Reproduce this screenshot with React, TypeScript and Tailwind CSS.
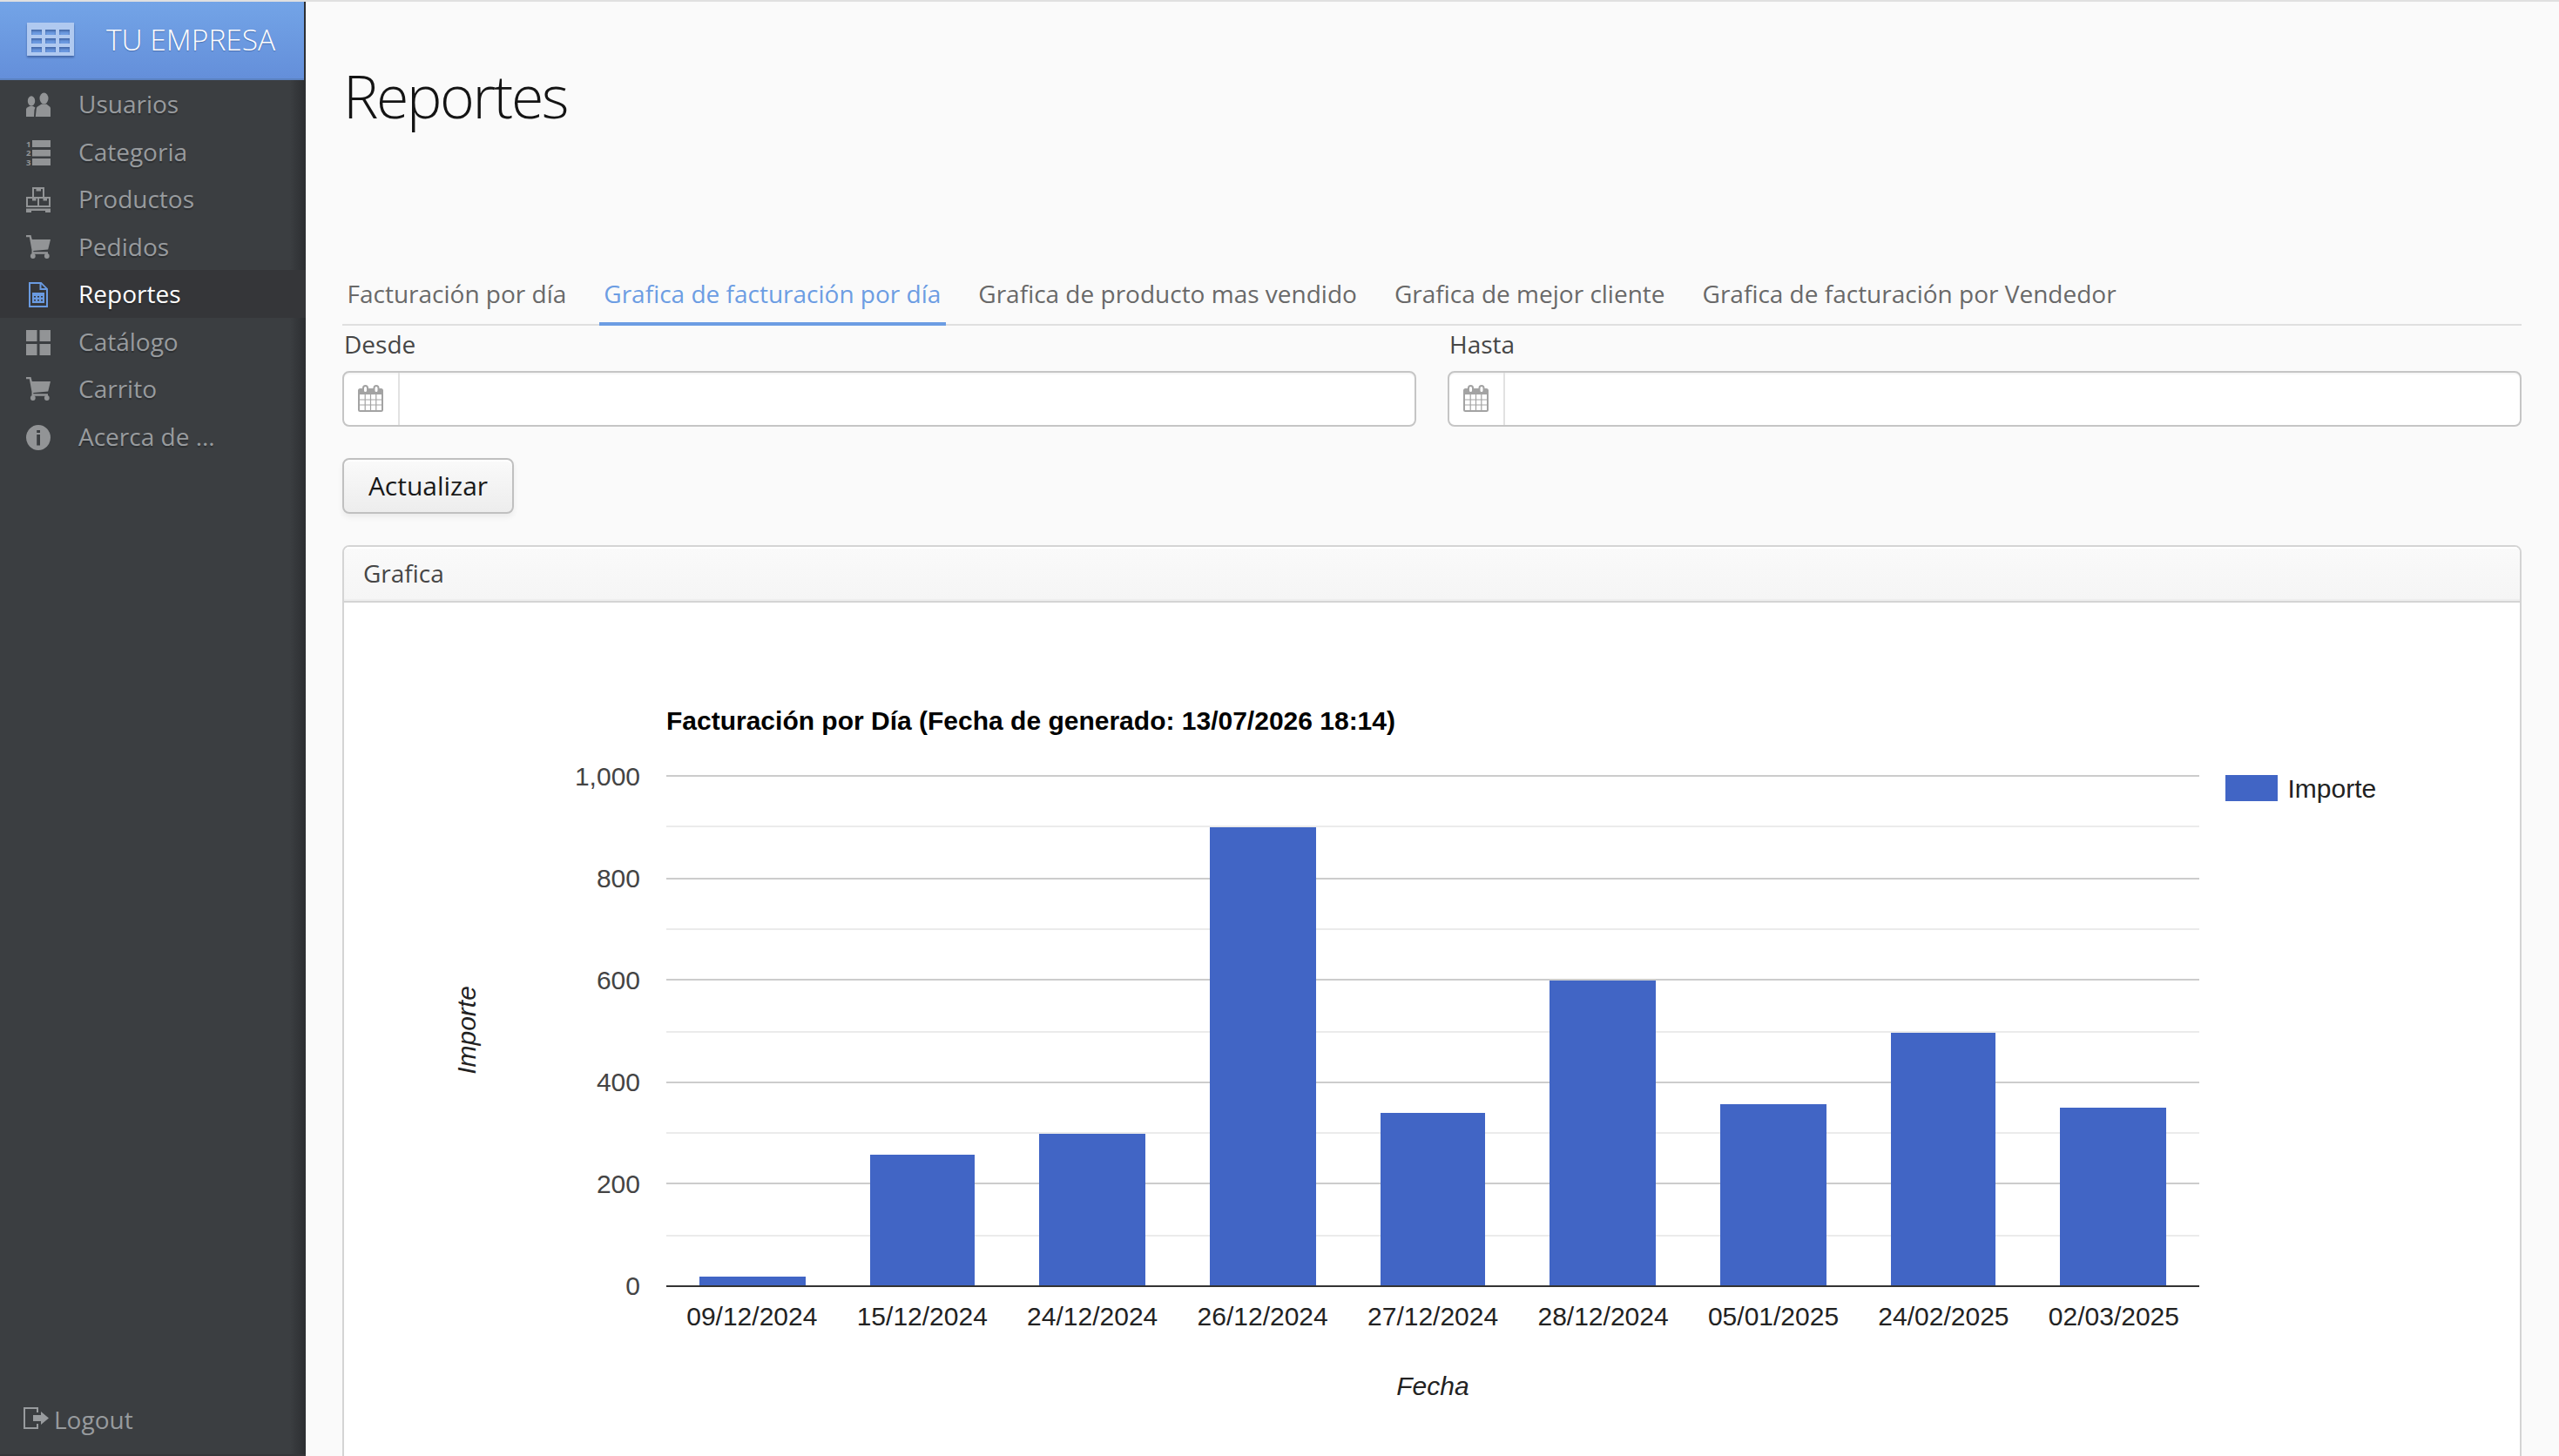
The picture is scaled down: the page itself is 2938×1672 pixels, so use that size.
import type { ReactNode } from "react";

const icons: Record<string, ReactNode> = {
  users: (
    <>
      <ellipse cx="6" cy="10" rx="4.2" ry="5.8" />
      <path d="M0 28V19.500q0-2 2-2.500l2-1h4l2.500 1.500L9.500 20l-.500 8z" />
      <ellipse cx="20.500" cy="7" rx="5" ry="6.500" />
      <path d="M10.800 28l1-9.500q.200-2 2-2.500l4-2.500h5.500l3.200 2.500q1.500.700 1.500 2.500V28z" />
    </>
  ),
  list: (
    <>
      <rect x="7" y="0" width="21" height="8" />
      <rect x="7" y="11" width="21" height="7.500" />
      <rect x="7" y="21" width="21" height="8" />
      <g className="font-['Open_Sans',sans-serif] text-[9.5px] font-bold">
        <text x="0" y="7.500">1</text>
        <text x="0" y="18">2</text>
        <text x="0" y="28.500">3</text>
      </g>
    </>
  ),
  stock: (
    <>
      <path fillRule="evenodd" d="M7 0h14v11h7v12H0V11h7zM9 2v9h4v0h6V2h-2v2.500h-5.500V2zM2 13v8h11v-8h-1.500v2.500h-4.500V13zM15 13v8h11v-8h-2v2.500h-4.500V13z" />
      <path d="M0 24.500h28V29h-6v-2H6v2H0z" />
    </>
  ),
  cart: (
    <>
      <path d="M0 0h5.500l1.300 5H28l-2.800 11.500L8.300 18v1.300H25v2.500H6.500V17L3.800 2.200H0z" />
      <circle cx="7.800" cy="24" r="2.900" />
      <circle cx="23.800" cy="24" r="2.900" />
    </>
  ),
  report: (
    <>
      <path fillRule="evenodd" d="M3 0h14.500L25 7.500V29H3zM5 2v25h18V9h-7.500V2zM17.500 2.500V7H22z" />
      <path fillRule="evenodd" d="M7 12h14v12H7zM9 16v1.500h2V16zM13 16v1.500h2V16zM17 16v1.500h2V16zM9 20v1.500h2V20zM13 20v1.500h2V20zM17 20v1.500h2V20z" />
    </>
  ),
  grid: <path d="M0 0h12.500v13H0zM15.500 0H28v13H15.500zM0 16h12.500v13H0zM15.500 16H28v13H15.500z" />,
  info: (
    <path fillRule="evenodd" d="M14 0a14 14.500 0 1 1 0 29a14 14.500 0 1 1 0-29zM12.200 6v3h3.800V6zM12.200 11v12.500h3.800V11z" />
  ),
};

const menu = [
  { icon: "users", label: "Usuarios" },
  { icon: "list", label: "Categoria" },
  { icon: "stock", label: "Productos" },
  { icon: "cart", label: "Pedidos" },
  { icon: "report", label: "Reportes", active: true },
  { icon: "grid", label: "Catálogo" },
  { icon: "cart", label: "Carrito" },
  { icon: "info", label: "Acerca de ..." },
];

const tabs = [
  "Facturación por día",
  "Grafica de facturación por día",
  "Grafica de producto mas vendido",
  "Grafica de mejor cliente",
  "Grafica de facturación por Vendedor",
];

// plot coordinates are relative to the panel body
const bars = [
  { label: "09/12/2024", x: 408, w: 122, top: 774 },
  { label: "15/12/2024", x: 604, w: 120, top: 634 },
  { label: "24/12/2024", x: 798, w: 122, top: 610 },
  { label: "26/12/2024", x: 994, w: 122, top: 258 },
  { label: "27/12/2024", x: 1190, w: 120, top: 586 },
  { label: "28/12/2024", x: 1384, w: 122, top: 434 },
  { label: "05/01/2025", x: 1580, w: 122, top: 576 },
  { label: "24/02/2025", x: 1776, w: 120, top: 494 },
  { label: "02/03/2025", x: 1970, w: 122, top: 580 },
];

const majorLines = [198, 316, 432, 550, 666];
const minorLines = [256, 374, 492, 608, 726];
const ticks = ["1,000", "800", "600", "400", "200", "0"];

function Logo() {
  return (
    <svg className="h-[44px] w-[56px] drop-shadow-[0_2px_1px_rgba(40,70,130,0.6)]" viewBox="0 0 56 44">
      <path
        fill="#b0c9f0"
        fillRule="evenodd"
        d="M1 2h54v38H1zM6 10v6h12v-6zM22 10v6h12v-6zM38 10v6h12v-6zM6 20v6h12v-6zM22 20v6h12v-6zM38 20v6h12v-6zM6 30v6h12v-6zM22 30v6h12v-6zM38 30v6h12v-6z"
      />
    </svg>
  );
}

function Sidebar() {
  return (
    <aside className="relative flex w-[351px] shrink-0 flex-col bg-[#3b3e41] text-[28px] text-[#989b9e]">
      <div className="absolute inset-y-0 right-0 w-[18px] bg-gradient-to-r from-transparent to-[#2c2e31]" />
      <div className="relative mr-[2px] flex h-[90px] items-center border-b-2 border-[#5b82c2] bg-gradient-to-b from-[#73a4e7] to-[#648fda] pl-[30px]">
        <Logo />
        <span className="mb-[2px] ml-[36px] text-[33.5px] font-light whitespace-nowrap text-white [text-shadow:0_1px_1px_rgba(40,70,130,0.5)]">
          TU EMPRESA
        </span>
      </div>
      <nav className="relative">
        {menu.map((m, i) => (
          <div
            key={i}
            className={`flex h-[54.5px] pl-[30px] ${m.active ? "bg-[#353639] text-white" : ""}`}
          >
            <svg
              className={`mt-[14px] h-[29px] w-[28px] shrink-0 overflow-visible ${m.active ? "text-[#6a9ae0]" : "text-[#929496]"}`}
              viewBox="0 0 28 29"
              fill="currentColor"
            >
              {icons[m.icon]}
            </svg>
            <span className="ml-[32px] leading-[55px] whitespace-nowrap [text-shadow:0_2px_1px_rgba(0,0,0,0.25)]">
              {m.label}
            </span>
          </div>
        ))}
      </nav>
      <div className="relative mt-auto flex h-[82px] items-center border-b-2 border-[#353639] pl-[27px]">
        <svg className="mt-[-4px] h-[25px] w-[29px]" viewBox="0 0 29 25" fill="currentColor">
          <path d="M0 0h17v6h-2V2H2v21h13v-4h2v6H0z" />
          <path d="M11 9h9V5l9 7.500-9 7.500v-4h-9z" />
        </svg>
        <span className="ml-[6px]">Logout</span>
      </div>
    </aside>
  );
}

function DateField({ label }: { label: string }) {
  return (
    <div>
      <div className="pl-[2px] text-[28px] leading-[42px]">{label}</div>
      <div className="mt-[10px] flex h-[64px] overflow-hidden rounded-[8px] border-2 border-[#c5c5c5] bg-white shadow-[inset_0_2px_0_#f7f7f7]">
        <div className="w-[64px] border-r-2 border-[#e2e2e2] pt-[14px] pl-[16px]">
          <svg className="h-[31px] w-[29px] text-[#a3a3a3]" viewBox="0 0 29 31">
            <rect x="1" y="5" width="27" height="25" rx="1.500" fill="none" stroke="currentColor" strokeWidth="2" />
            <path fill="currentColor" d="M1 5h27v6H1z" />
            <path stroke="currentColor" strokeWidth="1.200" d="M8.200 11v18M14.500 11v18M20.800 11v18M2 17h25M2 23h25" />
            <rect x="6" y="1" width="5" height="8" rx="2.500" fill="#fff" stroke="currentColor" strokeWidth="2" />
            <rect x="18.500" y="1" width="5" height="8" rx="2.500" fill="#fff" stroke="currentColor" strokeWidth="2" />
          </svg>
        </div>
      </div>
    </div>
  );
}

function Chart() {
  return (
    <svg
      className="block h-[980px] w-[2498px] font-['Liberation_Sans',Arial,sans-serif] text-[30px]"
      viewBox="0 0 2498 980"
      fill="#222"
    >
      <text x="370" y="146" fill="#000" className="font-bold">
        Facturación por Día (Fecha de generado: 13/07/2026 18:14)
      </text>
      {minorLines.map((y) => (
        <rect key={y} x="370" y={y} width="1760" height="2" fill="#ebebeb" />
      ))}
      {majorLines.map((y) => (
        <rect key={y} x="370" y={y} width="1760" height="2" fill="#ccc" />
      ))}
      {ticks.map((t, i) => (
        <text key={t} x="340" y={210 + i * 117} textAnchor="end" fill="#444">{t}</text>
      ))}
      {bars.map((b, i) => (
        <g key={b.label}>
          <rect x={b.x} y={b.top} width={b.w} height={784 - b.top} fill="#4165c5" />
          <text x={468.3 + i * 195.45} y="830" textAnchor="middle">{b.label}</text>
        </g>
      ))}
      <rect x="370" y="784" width="1760" height="2" fill="#333" />
      <text x="1250" y="910" textAnchor="middle" className="italic">Fecha</text>
      <text transform="translate(151 491) rotate(-90)" textAnchor="middle" className="italic">Importe</text>
      <rect x="2160" y="198" width="60" height="30" fill="#4165c5" />
      <text x="2231.500" y="224">Importe</text>
    </svg>
  );
}

export default function App() {
  return (
    <div className="flex h-[1672px] w-[2938px] overflow-hidden border-t-2 border-[#e0e0e0] bg-[#fafafa] font-['Open_Sans',sans-serif] text-[#464646]">
      <Sidebar />
      <main className="flex-1 pr-[43px] pl-[42px]">
        <h1 className="mt-[68px] pl-px text-[68px] leading-[80px] font-light tracking-[-2.4px] text-[#141414]">Reportes</h1>

        {/* Tabs */}
        <div className="mt-[152px] flex h-[72px] border-b-2 border-[#dfdfdf] text-[28px] text-[#696969]">
          {tabs.map((t, i) => (
            <div
              key={t}
              className={`mr-[32px] h-[72px] px-[5.5px] pt-[7px] leading-[56px] whitespace-nowrap ${
                i === 1 ? "border-b-4 border-[#6c9de3] text-[#6c9de3]" : ""
              }`}
            >
              {t}
            </div>
          ))}
        </div>

        <div className="grid grid-cols-2 gap-[36px]">
          <DateField label="Desde" />
          <DateField label="Hasta" />
        </div>

        <button className="mt-[36px] block h-[64px] w-[197px] rounded-[8px] border-2 border-[#c0c0c0] bg-gradient-to-b from-[#fafafa] to-[#ededed] pb-[2px] text-[30px] text-[#191919] shadow-[inset_0_2px_0_#fff,0_4px_6px_rgba(0,0,0,0.06)]">
          Actualizar
        </button>

        {/* Chart panel */}
        <section className="mt-[36px] h-[1100px] overflow-hidden rounded-[8px] border-2 border-[#d4d4d4] bg-white">
          <div className="h-[64px] border-b-2 border-[#d4d4d4] bg-gradient-to-b from-[#fafafa] to-[#f5f5f5] pl-[22px] text-[28px] leading-[60px] shadow-[inset_0_2px_0_#fff,inset_0_-2px_0_#eee]">
            Grafica
          </div>
          <Chart />
        </section>
      </main>
    </div>
  );
}
